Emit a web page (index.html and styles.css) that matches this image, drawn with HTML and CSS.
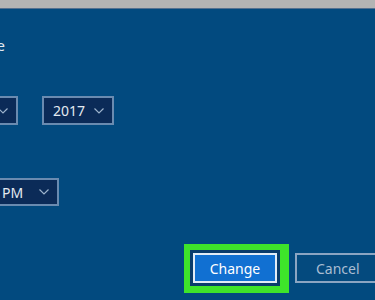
FILE: index.html
```html
<!DOCTYPE html>
<html>
<head>
<meta charset="utf-8">
<link rel="stylesheet" href="styles.css">
</head>
<body>
<div class="titlebar"></div>
<main class="dialog">
  <div class="title">Change date and time</div>
  <div class="row row-date">
    <div class="select select-month"><span class="val">June</span><svg class="chev" viewBox="0 0 10 6"><path d="M0.5 0.5 L5 5 L9.5 0.5"/></svg></div>
    <div class="select select-year"><span class="val">2017</span><svg class="chev" viewBox="0 0 10 6"><path d="M0.5 0.5 L5 5 L9.5 0.5"/></svg></div>
  </div>
  <div class="row row-time">
    <div class="select select-ampm"><span class="val">PM</span><svg class="chev" viewBox="0 0 10 6"><path d="M0.5 0.5 L5 5 L9.5 0.5"/></svg></div>
  </div>
  <div class="buttons">
    <div class="highlight"><button class="btn btn-primary">Change</button></div>
    <button class="btn btn-secondary">Cancel</button>
  </div>
</main>
</body>
</html>
```
FILE: styles.css
```css
html, body {
  margin: 0;
  padding: 0;
}
body {
  width: 375px;
  height: 300px;
  overflow: hidden;
  background: #024a7f;
  font-family: "Noto Sans", "Open Sans", sans-serif;
  color: #e3e9f1;
}
.titlebar {
  height: 8px;
  background: #b4b4b4;
  border-bottom: 1px solid #54708f;
}
.dialog {
  display: flex;
  flex-direction: column;
}
.title {
  margin-top: 26px;
  margin-left: -151px;
  font-size: 15px;
  line-height: 20px;
  white-space: nowrap;
}
.row {
  display: flex;
  gap: 24px;
}
.row-date {
  margin-top: 41px;
}
.row-time {
  margin-top: 53px;
}
.select {
  box-sizing: border-box;
  height: 29px;
  border: 2px solid #6a8bb0;
  background: #0b2b58;
  display: flex;
  align-items: center;
  justify-content: space-between;
  padding: 0 8px 0 9px;
  font-size: 14px;
  flex-shrink: 0;
}
.select-month {
  width: 72px;
  margin-left: -54px;
}
.select-year {
  width: 72px;
}
.select-ampm {
  width: 68px;
  height: 28px;
  margin-left: -9px;
}
.chev {
  width: 10px;
  height: 6px;
  fill: none;
  stroke: #9db3cc;
  stroke-width: 1.2;
}
.buttons {
  display: flex;
  align-items: flex-start;
  margin-top: 38px;
  margin-left: 184px;
  gap: 6px;
}
.highlight {
  background: #3ee42a;
  padding: 9px 12px 10px 9px;
  display: flex;
}
.btn {
  box-sizing: border-box;
  height: 30px;
  font-family: inherit;
  font-size: 14px;
  margin: 0;
  padding: 0;
}
.btn-primary {
  width: 84px;
  border: 2px solid #e2ecf7;
  background: #1170d2;
  color: #ffffff;
  box-shadow: 0 0 0 3px #0a3c6c;
}
.btn-secondary {
  width: 100px;
  margin-top: 9px;
  border: 2px solid #8ba5c2;
  background: #044a7e;
  color: #a9bdd2;
  flex-shrink: 0;
  text-align: left;
  padding-left: 19px;
}
```
